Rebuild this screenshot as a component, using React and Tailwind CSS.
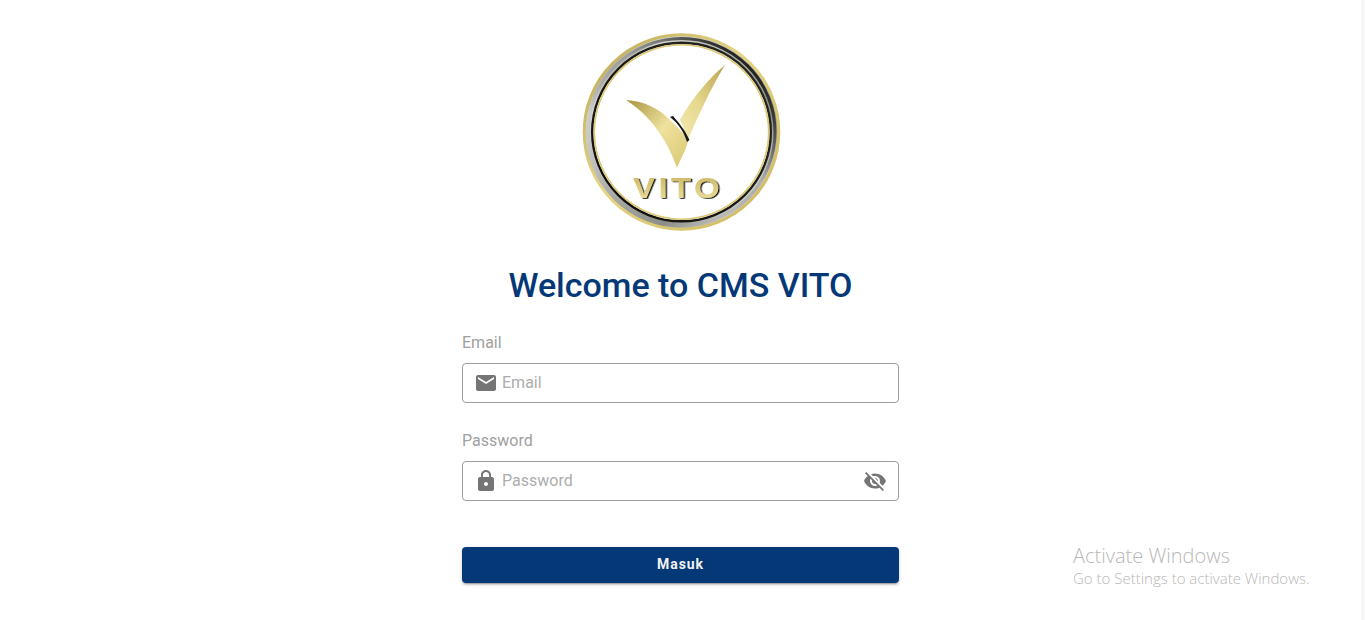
import React from "react";

function Logo() {
  return (
    <svg viewBox="0 0 200 200" className="w-[200px] h-[200px] block" aria-label="VITO">
      <defs>
        <linearGradient id="gold" x1="0" y1="0" x2="1" y2="1">
          <stop offset="0" stopColor="#b9a651" />
          <stop offset="0.45" stopColor="#e6d584" />
          <stop offset="1" stopColor="#cdb65a" />
        </linearGradient>
        <linearGradient id="silver" x1="0" y1="0" x2="1" y2="1">
          <stop offset="0" stopColor="#6f6d62" />
          <stop offset="0.2" stopColor="#d4d4d2" />
          <stop offset="0.5" stopColor="#a9a9a4" />
          <stop offset="0.7" stopColor="#8d8d88" />
          <stop offset="0.85" stopColor="#c9c9c6" />
          <stop offset="1" stopColor="#77766c" />
        </linearGradient>
        <linearGradient id="topdark" x1="0.85" y1="0.1" x2="0.2" y2="0.8">
          <stop offset="0" stopColor="#141410" stopOpacity="0.95" />
          <stop offset="0.45" stopColor="#141410" stopOpacity="0.15" />
          <stop offset="1" stopColor="#141410" stopOpacity="0" />
        </linearGradient>
        <linearGradient id="dark" x1="1" y1="0" x2="0" y2="1">
          <stop offset="0" stopColor="#2a2a24" />
          <stop offset="1" stopColor="#0c0c0a" />
        </linearGradient>
        <linearGradient id="check" x1="0" y1="0" x2="1" y2="1">
          <stop offset="0" stopColor="#a8923f" />
          <stop offset="0.5" stopColor="#efe29e" />
          <stop offset="1" stopColor="#d8c670" />
        </linearGradient>
        <linearGradient id="wing" x1="1" y1="0" x2="0" y2="1">
          <stop offset="0" stopColor="#b9a44e" />
          <stop offset="0.55" stopColor="#e6d88e" />
          <stop offset="1" stopColor="#f3eab2" />
        </linearGradient>
        <linearGradient id="letters" x1="0" y1="0" x2="0" y2="1">
          <stop offset="0" stopColor="#c9b35e" />
          <stop offset="1" stopColor="#efe3a2" />
        </linearGradient>
        <filter id="soft" x="-5%" y="-5%" width="110%" height="110%">
          <feGaussianBlur stdDeviation="0.5" />
        </filter>
        <filter id="bevel" x="-10%" y="-20%" width="120%" height="140%">
          <feDropShadow dx="1.400" dy="0.800" stdDeviation="0.400" floodColor="#0f0f0b" />
        </filter>
      </defs>
      <g filter="url(#soft)">
        <circle cx="100.500" cy="100" r="97" fill="none" stroke="url(#gold)" strokeWidth="3.600" />
        <circle cx="100.500" cy="100" r="92.500" fill="none" stroke="url(#silver)" strokeWidth="6.500" />
        <circle cx="100.500" cy="100" r="93.500" fill="none" stroke="url(#topdark)" strokeWidth="3" />
        <circle cx="100.500" cy="100" r="89.300" fill="none" stroke="url(#dark)" strokeWidth="2.400" />
        <circle cx="100.500" cy="100" r="87.200" fill="#fff" stroke="#dcc976" strokeWidth="1.600" />
        <path d="M45 68 C62 69 78 76 89 88 C97 95 103 102 107 109 C105 118 99 128 96 136 C90 118 75 87 45 68 Z" fill="url(#check)" />
        <path d="M144 33 C126 48 110 68 99 88 C102 93 105 102 106 110 C117 84 130 56 144 33 Z" fill="url(#wing)" />
        <path d="M89 85 C97 91 103 100 106 110 L108.500 108 C104 98 98 91 92 84 Z" fill="#161613" />
      </g>
      <text
        x="97"
        y="166"
        textAnchor="middle"
        fontFamily="'Liberation Sans', sans-serif"
        fontWeight="700"
        fontSize="29"
        fill="url(#letters)"
        filter="url(#bevel)"
        textLength="90"
        lengthAdjust="spacingAndGlyphs"
        letterSpacing="3"
      >
        VITO
      </text>
    </svg>
  );
}

export default function App() {
  return (
    <div className="relative flex h-[620px] w-full overflow-hidden bg-white font-['Roboto',sans-serif]">
      <main className="flex flex-1 flex-col items-center pt-[32px]">
        <Logo />
        <h1 className="mt-[30px] text-[34px] leading-[46px] font-medium text-[#053877] whitespace-nowrap">
          Welcome to CMS VITO
        </h1>
        <form className="mt-[23px] flex w-[437px] flex-col">
          <label className="text-base leading-[24px] text-[#a0a0a0]">Email</label>
          <div className="mt-[8px] flex h-[40px] items-center rounded-[4px] border border-[#9e9e9e] bg-white px-[11px]">
            <svg viewBox="0 0 24 24" className="h-[24px] w-[24px] shrink-0 fill-[#757575]">
              <path d="M20 4H4c-1.100 0-1.990.9-1.990 2L2 18c0 1.100.9 2 2 2h16c1.100 0 2-.9 2-2V6c0-1.100-.9-2-2-2zm0 4l-8 5-8-5V6l8 5 8-5v2z" />
            </svg>
            <span className="ml-[4px] text-base text-[#adadad]">Email</span>
          </div>
          <label className="mt-[26px] text-base leading-[24px] text-[#a0a0a0]">Password</label>
          <div className="mt-[8px] flex h-[40px] items-center rounded-[4px] border border-[#9e9e9e] bg-white px-[11px]">
            <svg viewBox="0 0 24 24" className="h-[24px] w-[24px] shrink-0 fill-[#757575]">
              <path d="M18 8h-1V6c0-2.760-2.240-5-5-5S7 3.240 7 6v2H6c-1.100 0-2 .9-2 2v10c0 1.100.9 2 2 2h12c1.100 0 2-.9 2-2V10c0-1.100-.9-2-2-2zm-6 9c-1.100 0-2-.9-2-2s.9-2 2-2 2 .9 2 2-.9 2-2 2zm3.100-9H8.900V6c0-1.710 1.390-3.100 3.100-3.100 1.710 0 3.100 1.390 3.100 3.100v2z" />
            </svg>
            <span className="ml-[4px] flex-1 text-base text-[#adadad]">Password</span>
            <svg viewBox="0 0 24 24" className="h-[24px] w-[24px] shrink-0 fill-[#757575]">
              <path d="M12 7c2.760 0 5 2.240 5 5 0 .65-.13 1.260-.36 1.830l2.920 2.920c1.510-1.260 2.700-2.890 3.430-4.750-1.730-4.390-6-7.500-11-7.500-1.400 0-2.740.25-3.980.7l2.160 2.160C10.740 7.130 11.350 7 12 7zM2 4.270l2.280 2.280.46.46C3.080 8.300 1.780 10.020 1 12c1.730 4.390 6 7.500 11 7.500 1.550 0 3.030-.3 4.380-.84l.42.42L19.730 22 21 20.730 3.270 3 2 4.270zM7.530 9.800l1.550 1.550c-.05.21-.08.43-.08.65 0 1.660 1.340 3 3 3 .22 0 .44-.03.65-.08l1.550 1.550c-.67.33-1.410.53-2.200.53-2.760 0-5-2.240-5-5 0-.79.2-1.530.53-2.200zm4.310-.78l3.150 3.150.02-.16c0-1.660-1.340-3-3-3l-.17.010z" />
            </svg>
          </div>
          <button
            type="button"
            className="mt-[46px] h-[36px] rounded-[4px] bg-[#053877] pb-[2px] text-sm font-bold tracking-[0.9px] text-[#f2f2f2] shadow-[0_3px_1px_-2px_rgba(0,0,0,0.2),0_2px_2px_0_rgba(0,0,0,0.14),0_1px_5px_0_rgba(0,0,0,0.12)]"
          >
            Masuk
          </button>
        </form>
      </main>
      <div className="w-[4px] shrink-0 bg-[#f7f7f7]" />
      <div className="absolute left-[1073px] top-[543px] font-['Open_Sans',sans-serif] text-[#b8b8b8] whitespace-nowrap">
        <div className="text-[20px] leading-[26px] font-light">Activate Windows</div>
        <div className="text-[15px] leading-[19px] font-light">Go to Settings to activate Windows.</div>
      </div>
    </div>
  );
}
